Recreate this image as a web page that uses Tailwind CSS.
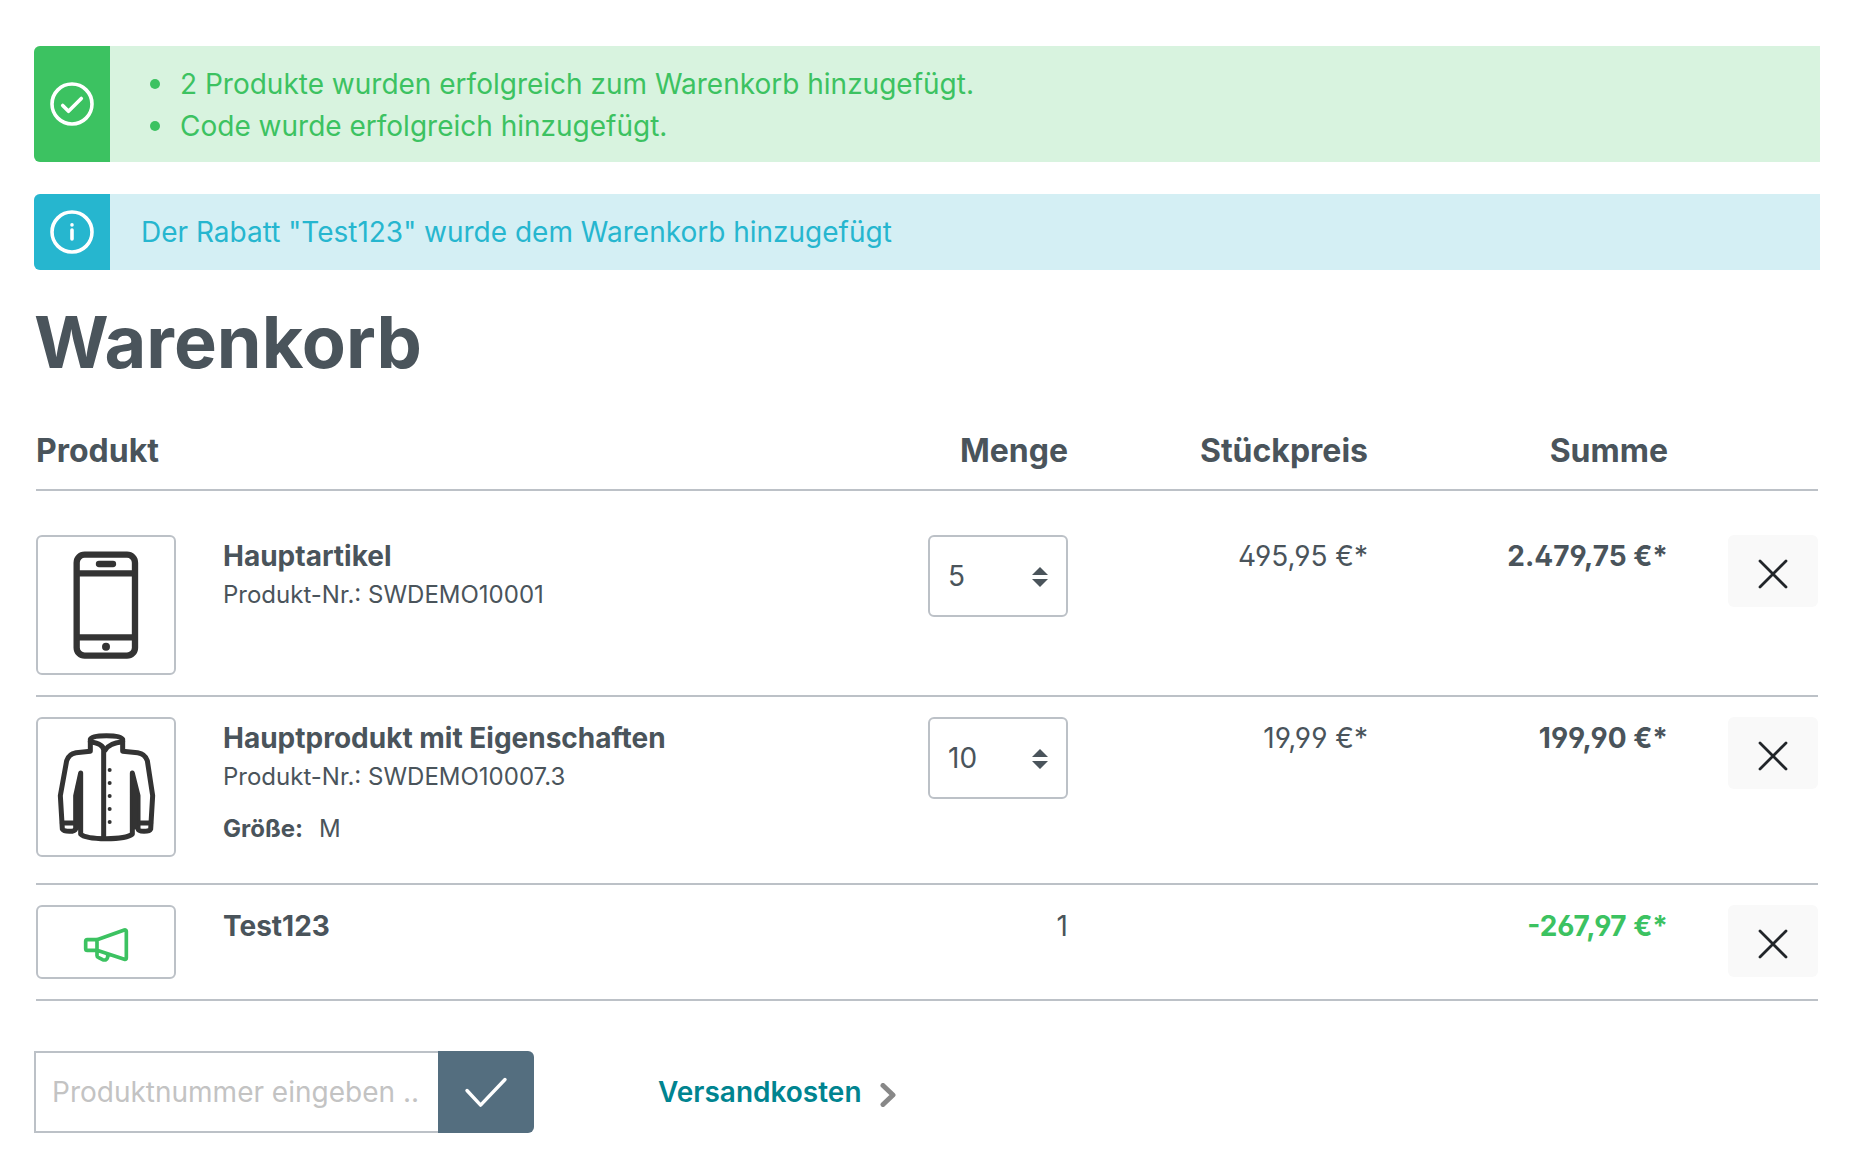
<!DOCTYPE html>
<html lang="de">
<head>
<meta charset="utf-8">
<meta name="viewport" content="width=device-width, initial-scale=1">
<title>Warenkorb</title>
<script src="https://cdn.jsdelivr.net/npm/@tailwindcss/browser@4"></script>
</head>
<body class="bg-white font-['Inter',sans-serif] text-[28px] leading-[42px] text-[#4a545b]">
<main class="pt-[46px] pr-[38px] pb-10 pl-[34px]">

  <div role="alert" class="flex rounded-l-md overflow-hidden bg-[#d8f3df] text-[#3cc261]">
    <div class="flex w-[76px] shrink-0 items-center justify-center bg-[#3cc261] text-white">
      <svg class="size-11" viewBox="0 0 44 44" fill="none" stroke="currentColor" stroke-width="3.6" stroke-linecap="round" stroke-linejoin="round" aria-hidden="true"><circle cx="22" cy="22" r="20"/><path d="M12.7 23.5l5.8 5.8L31.3 16.5"/></svg>
    </div>
    <ul class="pt-[17px] pr-8 pb-[15px] pl-10">
      <li class="flex items-center gap-5 before:size-2.5 before:shrink-0 before:rounded-full before:bg-current">2 Produkte wurden erfolgreich zum Warenkorb hinzugefügt.</li>
      <li class="flex items-center gap-5 before:size-2.5 before:shrink-0 before:rounded-full before:bg-current">Code wurde erfolgreich hinzugefügt.</li>
    </ul>
  </div>

  <div role="alert" class="mt-8 flex rounded-l-md overflow-hidden bg-[#d4eff4] text-[#26b6cf]">
    <div class="flex w-[76px] shrink-0 items-center justify-center bg-[#26b6cf] text-white">
      <svg class="size-11" viewBox="0 0 44 44" fill="none" stroke="currentColor" stroke-width="3.6" stroke-linecap="round" aria-hidden="true"><circle cx="22" cy="22" r="20"/><path d="M22 20v9M22 14.9v.1"/></svg>
    </div>
    <p class="px-[31px] py-[17px]">Der Rabatt "Test123" wurde dem Warenkorb hinzugefügt</p>
  </div>

  <h1 class="mt-8 text-7xl leading-20 font-bold">Warenkorb</h1>

  <div class="mt-[45px] px-0.5">
  <table class="w-full table-fixed border-separate border-spacing-0">
    <colgroup><col><col class="w-[300px]"><col class="w-[300px]"><col class="w-[300px]"><col class="w-[150px]"></colgroup>
    <thead>
      <tr class="text-right text-[32px] leading-12 *:border-b-2 *:border-[#bcc1c7]">
        <th scope="col" class="pb-3.5 text-left font-bold">Produkt</th>
        <th scope="col" class="pb-3.5 font-bold">Menge</th>
        <th scope="col" class="pb-3.5 font-bold">Stückpreis</th>
        <th scope="col" class="pb-3.5 font-bold">Summe</th>
        <td></td>
      </tr>
      <tr aria-hidden="true"><td colspan="5" class="h-6 p-0"></td></tr>
    </thead>
    <tbody class="align-top">
      <tr class="*:border-b-2 *:border-[#bcc1c7]">
        <td class="py-5">
          <div class="flex gap-[47px]">
            <div class="size-[140px] shrink-0 rounded-md border-2 border-[#bcc1c7]">
              <svg class="size-full" viewBox="54 384 408 408" fill="none" stroke="#333" stroke-width="19" role="img" aria-label="Smartphone"><rect x="170" y="437" width="175" height="303" rx="24"/><path d="M170 493h175M170 685h175"/><path d="M237 465h42" stroke-linecap="round"/><circle cx="258" cy="713" r="12" fill="#333" stroke="none"/></svg>
            </div>
            <div>
              <p class="font-bold">Hauptartikel</p>
              <p class="text-2xl leading-9">Produkt-Nr.: SWDEMO10001</p>
            </div>
          </div>
        </td>
        <td class="py-5">
          <div class="relative ml-auto w-[140px]">
            <select aria-label="Menge Hauptartikel" class="h-[82px] w-full appearance-none rounded-md border-2 border-[#bcc1c7] bg-white pl-[18px] [font-feature-settings:'ss01']"><option>5</option></select>
            <svg class="pointer-events-none absolute top-8 right-5 h-5 w-4" viewBox="0 0 16 20" fill="currentColor" aria-hidden="true"><path d="M8 0l8 8H0zM8 20l8-8H0z"/></svg>
          </div>
        </td>
        <td class="py-5 text-right [font-feature-settings:'ss01']">495,95 €*</td>
        <td class="py-5 text-right font-bold [font-feature-settings:'ss01']">2.479,75 €*</td>
        <td class="py-5"><button aria-label="Hauptartikel entfernen" class="ml-auto flex h-18 w-[90px] items-center justify-center rounded-md bg-[#f9f9f9] pt-1.5 text-[#212529]"><svg class="size-[30px]" viewBox="0 0 30 30" fill="none" stroke="currentColor" stroke-width="2.8" stroke-linecap="round" aria-hidden="true"><path d="M2 2l26 26M28 2L2 28"/></svg></button></td>
      </tr>
      <tr class="*:border-b-2 *:border-[#bcc1c7]">
        <td class="py-5">
          <div class="flex gap-[47px]">
            <div class="size-[140px] shrink-0 rounded-md border-2 border-[#bcc1c7]">
              <svg class="size-full" viewBox="54 90 408 408" fill="none" stroke="#333" stroke-width="15" stroke-linecap="round" stroke-linejoin="round" role="img" aria-label="Jacke">
                <path d="M211 151q4-11 48-11t49 11v36l45 4q23 4 29 24l16 105-6 100q-3 7-20 7t-18-7V320l-17-68v183q-16 14-79 14t-76-14V252l-15 68v100q-2 7-19 7t-21-7l-6-100 19-105q6-20 28-24l43-4z"/>
                <path d="M127 402h38M354 402h38M211 158q38 6 40 24v262M308 158q-42 4-53 26"/>
                <path d="M174 290v125M345 290v125" stroke-width="13"/>
                <path d="M269 243v0M269 282v0M269 321v0M269 360v0M269 399v0" stroke-width="12"/>
              </svg>
            </div>
            <div class="pb-4">
              <p class="font-bold">Hauptprodukt mit Eigenschaften</p>
              <p class="text-2xl leading-9">Produkt-Nr.: SWDEMO10007.3</p>
              <p class="mt-4 flex gap-4 text-2xl leading-9"><span class="font-bold">Größe:</span><span>M</span></p>
            </div>
          </div>
        </td>
        <td class="py-5">
          <div class="relative ml-auto w-[140px]">
            <select aria-label="Menge Hauptprodukt mit Eigenschaften" class="h-[82px] w-full appearance-none rounded-md border-2 border-[#bcc1c7] bg-white pl-[18px] [font-feature-settings:'ss01']"><option>10</option></select>
            <svg class="pointer-events-none absolute top-8 right-5 h-5 w-4" viewBox="0 0 16 20" fill="currentColor" aria-hidden="true"><path d="M8 0l8 8H0zM8 20l8-8H0z"/></svg>
          </div>
        </td>
        <td class="py-5 text-right [font-feature-settings:'ss01']">19,99 €*</td>
        <td class="py-5 text-right font-bold [font-feature-settings:'ss01']">199,90 €*</td>
        <td class="py-5"><button aria-label="Hauptprodukt mit Eigenschaften entfernen" class="ml-auto flex h-18 w-[90px] items-center justify-center rounded-md bg-[#f9f9f9] pt-1.5 text-[#212529]"><svg class="size-[30px]" viewBox="0 0 30 30" fill="none" stroke="currentColor" stroke-width="2.8" stroke-linecap="round" aria-hidden="true"><path d="M2 2l26 26M28 2L2 28"/></svg></button></td>
      </tr>
      <tr class="*:border-b-2 *:border-[#bcc1c7]">
        <td class="py-5">
          <div class="flex gap-[47px]">
            <div class="h-[74px] w-[140px] shrink-0 rounded-md border-2 border-[#bcc1c7] text-[#3cc261]">
              <svg class="size-full" viewBox="54 654 408 210" fill="none" stroke="currentColor" stroke-width="11" stroke-linecap="round" stroke-linejoin="round" aria-hidden="true"><path d="M231 752h-29q-5 0-5 5v22q0 5 5 5h29zM231 752l82-29q6-1 6 4v80q0 6-6 4l-82-27M231 784v16q0 4 5 6l12 6q12 4 15-7v-8"/></svg>
            </div>
            <p class="font-bold">Test123</p>
          </div>
        </td>
        <td class="py-5 text-right [font-feature-settings:'ss01']">1</td>
        <td></td>
        <td class="py-5 text-right font-bold text-[#3cc261] [font-feature-settings:'ss01']">-267,97 €*</td>
        <td class="py-5"><button aria-label="Test123 entfernen" class="ml-auto flex h-18 w-[90px] items-center justify-center rounded-md bg-[#f9f9f9] pt-1.5 text-[#212529]"><svg class="size-[30px]" viewBox="0 0 30 30" fill="none" stroke="currentColor" stroke-width="2.8" stroke-linecap="round" aria-hidden="true"><path d="M2 2l26 26M28 2L2 28"/></svg></button></td>
      </tr>
    </tbody>
  </table>
  </div>

  <div class="mt-[50px] flex items-center gap-[124px]">
    <form class="flex h-[82px] w-[500px]">
      <input type="text" aria-label="Produktnummer" placeholder="Produktnummer eingeben .." class="min-w-0 flex-1 border-2 border-r-0 border-[#bcc1c7] bg-white pl-4 placeholder:text-[#c3c3c3]">
      <button aria-label="Hinzufügen" class="flex w-24 items-center justify-center rounded-r-md bg-[#546e7f] text-white"><svg class="h-8 w-11" viewBox="0 0 44 32" fill="none" stroke="currentColor" stroke-width="3.4" stroke-linecap="round" stroke-linejoin="round" aria-hidden="true"><path d="M3 14.5l13.6 14.6L41 3.5"/></svg></button>
    </form>
    <a href="#" class="flex items-center gap-[18px] font-semibold text-[#008490]">Versandkosten<svg class="mt-1.5 h-6 w-4 text-[#888]" viewBox="0 0 16 24" fill="none" stroke="currentColor" stroke-width="5" stroke-linecap="round" stroke-linejoin="round" aria-hidden="true"><path d="M3 2.5L13 12 3 21.5"/></svg></a>
  </div>
</main>
</body>
</html>
